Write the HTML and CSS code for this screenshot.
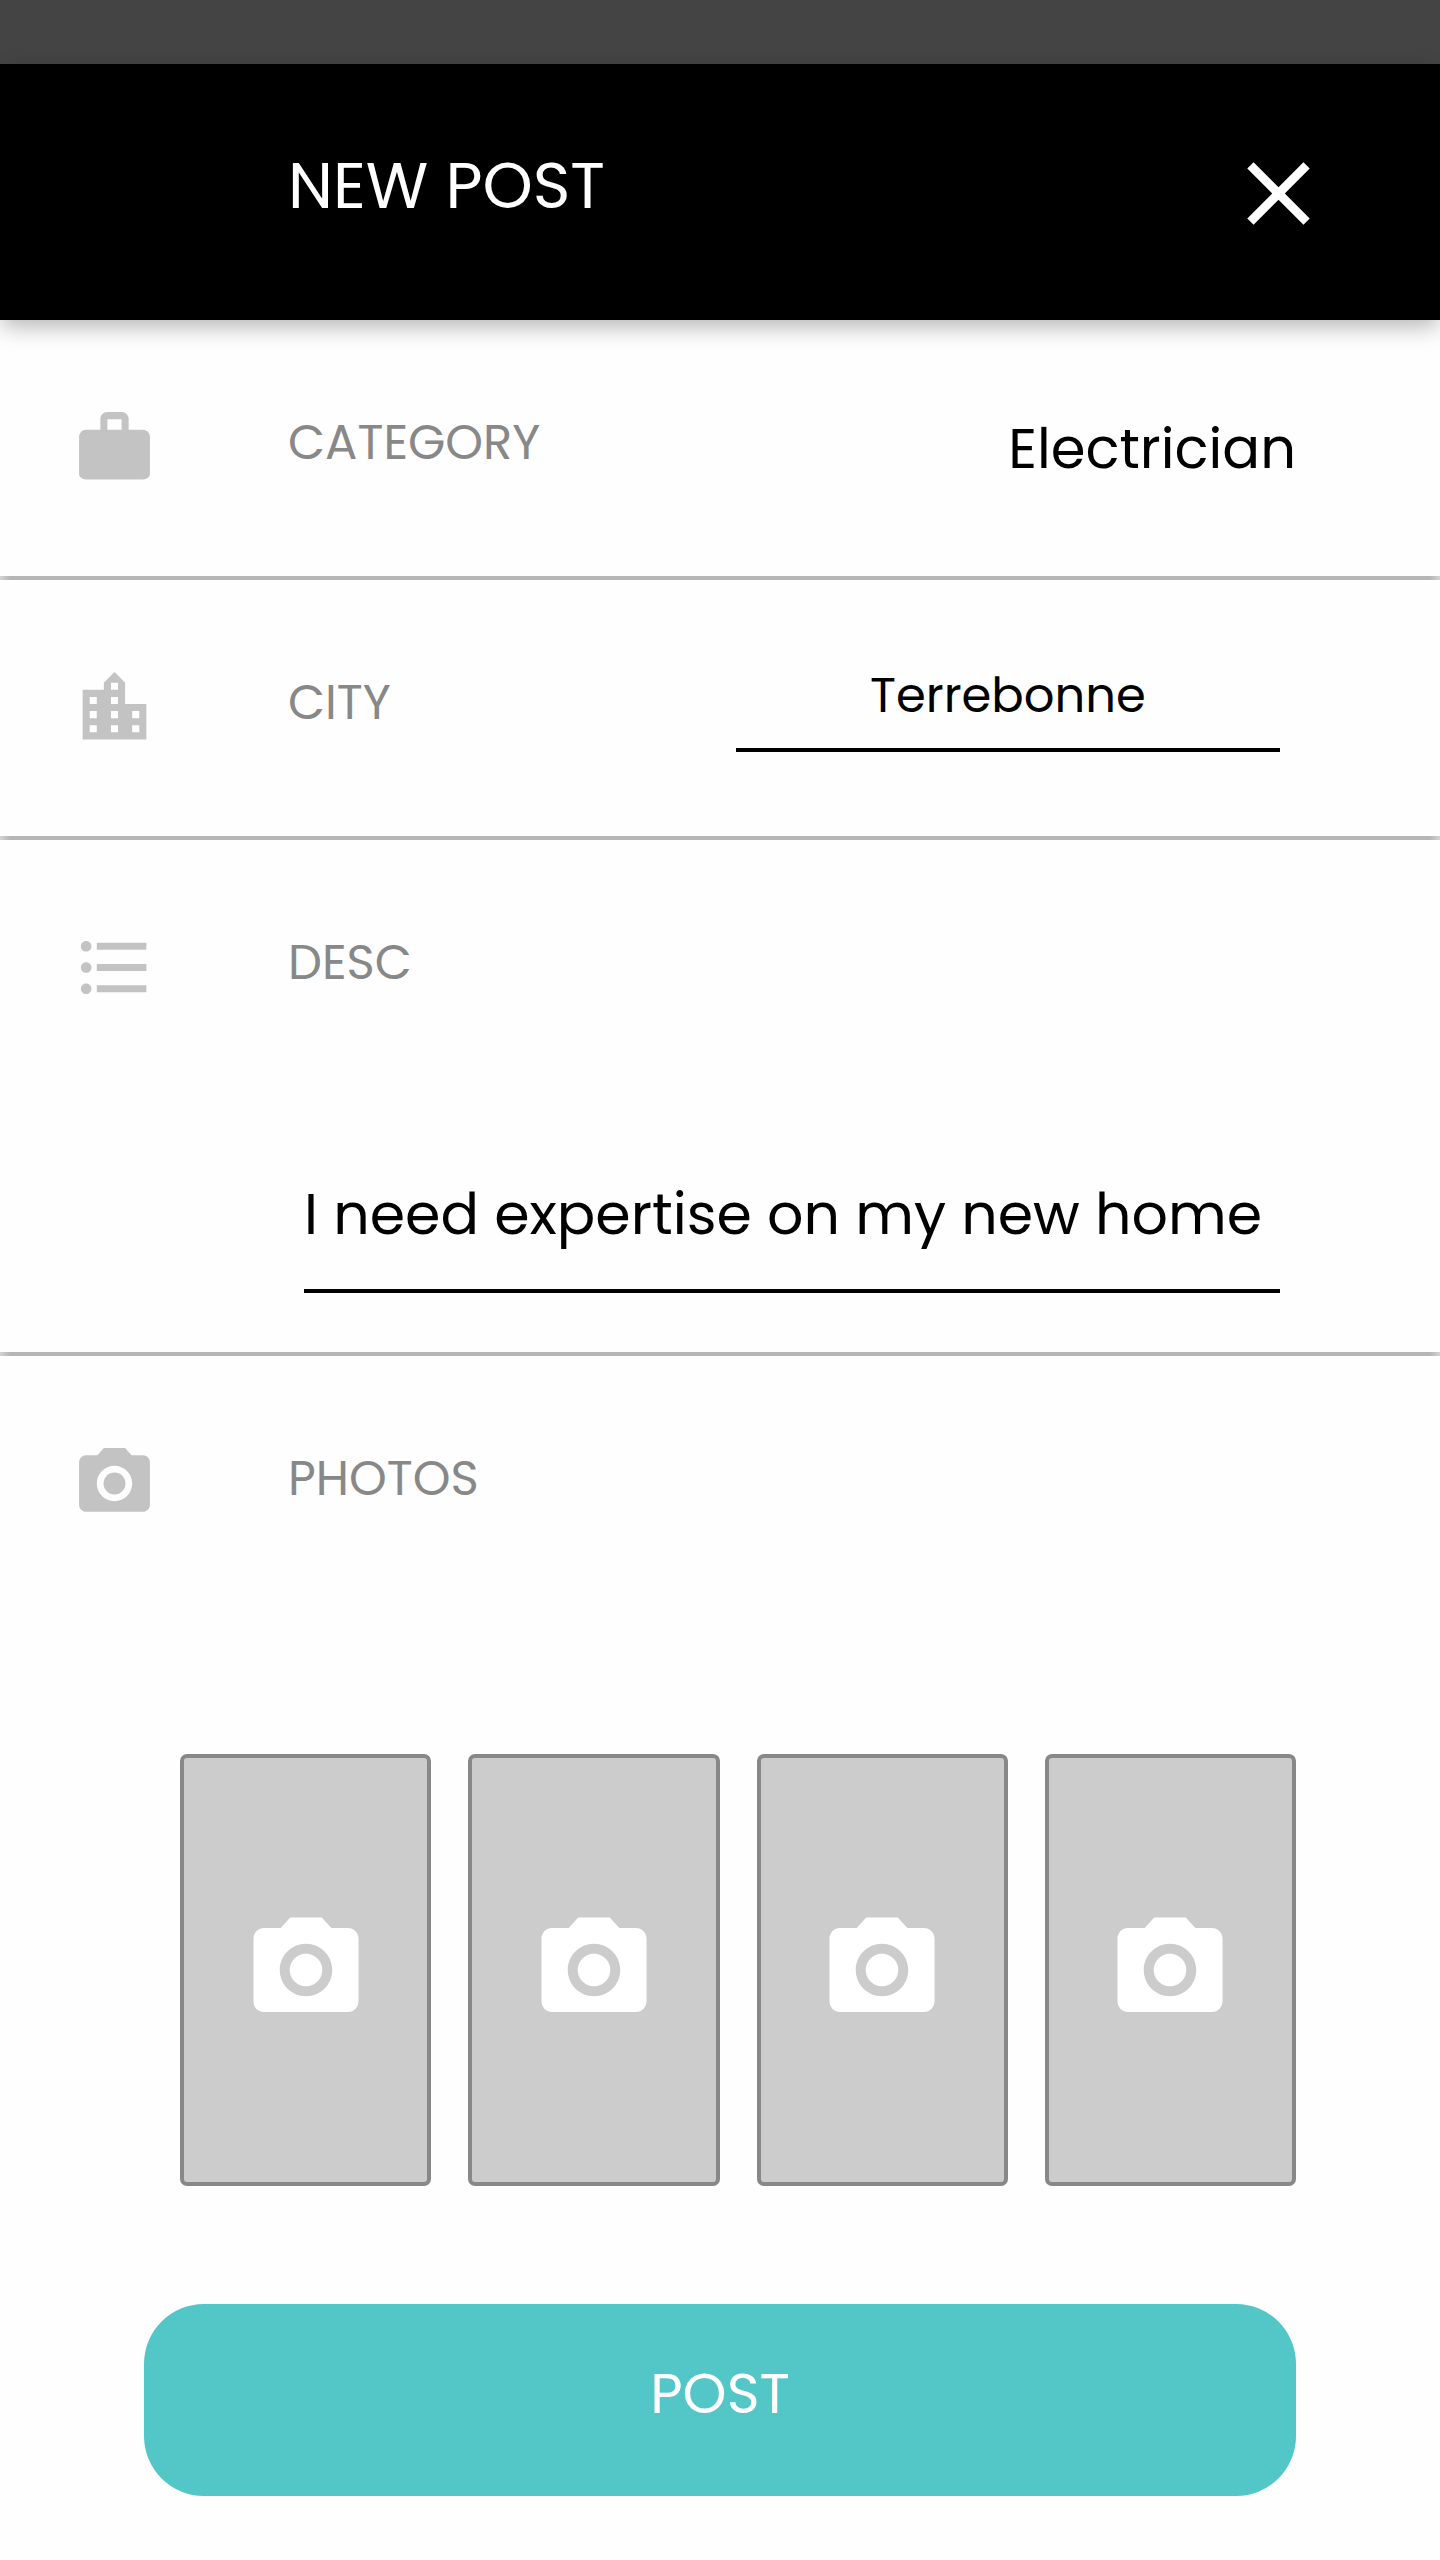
FILE: index.html
```html
<!DOCTYPE html>
<html lang="en">
<head>
  <meta charset="utf-8">
  <meta name="viewport" content="width=device-width, initial-scale=1">
  <title>New post</title>
  <link rel="stylesheet" href="styles.css">
</head>
<body>
  <svg class="sprite" aria-hidden="true">
    <symbol id="camera" viewBox="0 0 24 24">
      <circle cx="12" cy="12" r="3.1"/>
      <path d="M9 2 7.17 4H4c-1.1 0-2 .9-2 2v12c0 1.1.9 2 2 2h16c1.1 0 2-.9 2-2V6c0-1.1-.9-2-2-2h-3.17L15 2H9zm3 15c-2.76 0-5-2.24-5-5s2.24-5 5-5 5 2.24 5 5-2.24 5-5 5z"/>
    </symbol>
  </svg>
  <div class="status-bar"></div>
  <header class="header">
    <h1 class="header-title">NEW POST</h1>
    <button class="close" type="button" aria-label="Close">
      <svg class="close-icon" viewBox="0 0 24 24" aria-hidden="true"><path d="M19 6.41 17.59 5 12 10.59 6.41 5 5 6.41 10.59 12 5 17.59 6.41 19 12 13.41 17.59 19 19 17.59 13.41 12z"/></svg>
    </button>
  </header>
  <form class="form">
    <section class="row">
      <svg class="row-icon" viewBox="0 0 24 24" aria-hidden="true"><path d="M20 7h-4V4c0-1.1-.9-2-2-2h-4c-1.1 0-2 .9-2 2v3H4c-1.1 0-2 .9-2 2v10.500c0 .9.9 1.500 2 1.500h16c1.100 0 2-.6 2-1.500V9c0-1.100-.9-2-2-2zm-6 0h-4V4h4v3z"/></svg>
      <div class="row-body">
        <label class="label" for="category">CATEGORY</label>
        <select class="category" id="category"><option>Electrician</option></select>
      </div>
    </section>
    <section class="row">
      <svg class="row-icon" viewBox="0 0 24 24" aria-hidden="true"><path d="M15 11V5l-3-3-3 3v2H3v14h18V11h-6zm-8 8H5v-2h2v2zm0-4H5v-2h2v2zm0-4H5V9h2v2zm6 8h-2v-2h2v2zm0-4h-2v-2h2v2zm0-4h-2V9h2v2zm0-4h-2V5h2v2zm6 12h-2v-2h2v2zm0-4h-2v-2h2v2z"/></svg>
      <div class="row-body">
        <label class="label" for="city">CITY</label>
        <input class="field city" id="city" type="text" value="Terrebonne">
      </div>
    </section>
    <section class="row">
      <svg class="row-icon" viewBox="0 0 24 24" aria-hidden="true"><path d="M4 10.500c-.83 0-1.500.67-1.500 1.500s.67 1.500 1.500 1.500 1.500-.67 1.500-1.500-.67-1.500-1.500-1.500zm0-6c-.83 0-1.500.67-1.500 1.500S3.170 7.500 4 7.500 5.500 6.830 5.500 6 4.830 4.500 4 4.500zm0 12c-.83 0-1.500.68-1.500 1.500s.68 1.500 1.500 1.500 1.500-.68 1.500-1.500-.67-1.500-1.500-1.500zM7 19h14v-2H7v2zm0-6h14v-2H7v2zm0-8v2h14V5H7z"/></svg>
      <div class="row-body stacked">
        <label class="label" for="desc">DESC</label>
        <input class="field desc" id="desc" type="text" value="I need expertise on my new home">
      </div>
    </section>
    <section class="photos">
      <div class="row row-last">
        <svg class="row-icon" aria-hidden="true"><use href="#camera"/></svg>
        <div class="row-body"><h2 class="label">PHOTOS</h2></div>
      </div>
      <div class="tiles">
        <button class="tile" type="button" aria-label="Add photo 1"><svg class="tile-icon" aria-hidden="true"><use href="#camera"/></svg></button>
        <button class="tile" type="button" aria-label="Add photo 2"><svg class="tile-icon" aria-hidden="true"><use href="#camera"/></svg></button>
        <button class="tile" type="button" aria-label="Add photo 3"><svg class="tile-icon" aria-hidden="true"><use href="#camera"/></svg></button>
        <button class="tile" type="button" aria-label="Add photo 4"><svg class="tile-icon" aria-hidden="true"><use href="#camera"/></svg></button>
      </div>
    </section>
    <button class="submit" type="submit">POST</button>
  </form>
</body>
</html>
```

FILE: styles.css
```css
* {
  box-sizing: border-box;
}

body {
  margin: 0;
  background: #fefefe;
  color: #000;
  font-family: Poppins, Inter, "Liberation Sans", sans-serif;
}

button,
input,
select {
  margin: 0;
  padding: 0;
  border: 0;
  border-radius: 0;
  background: none;
  color: inherit;
  font-family: inherit;
  appearance: none;
}

.sprite {
  display: none;
}

.status-bar {
  height: 64px;
  background: #444;
}

.header {
  display: flex;
  justify-content: space-between;
  align-items: flex-start;
  min-height: 256px;
  padding: 76px 7.5% 0 20%;
  background: #000;
  color: #fff;
  box-shadow: 0 8px 22px -2px rgba(0, 0, 0, 0.3);
}

.header-title {
  margin: 6px 0 0;
  font-size: 64px;
  font-weight: 400;
  line-height: 80px;
}

.close,
.close-icon {
  display: block;
  width: 107px;
  height: 107px;
  fill: #fff;
}

.row {
  display: grid;
  grid-template-columns: 20% 70% 10%;
  align-items: start;
  min-height: 260px;
  background: linear-gradient(90deg, #d4d4d4, #b6b6b6 10px, #b6b6b6 calc(100% - 10px), #d4d4d4) bottom / 100% 4px no-repeat;
}

.row-last {
  min-height: 0;
  background: none;
}

.row-icon {
  width: 85px;
  height: 85px;
  margin: 85px 0 0 25%;
  fill: #c3c3c3;
}

.row-body {
  display: flex;
  justify-content: space-between;
  align-items: flex-start;
}

.stacked {
  flex-direction: column;
  align-items: stretch;
}

.label {
  margin: 93px 0 0;
  color: #888;
  font-size: 48px;
  font-weight: 400;
  line-height: 60px;
}

.category {
  height: 72px;
  margin-top: 93px;
  font-size: 56px;
  line-height: 72px;
  text-align: right;
  text-align-last: right;
}

.field {
  margin: 0 16px;
  border-bottom: 4px solid #000;
}

.city {
  width: 54%;
  height: 86px;
  margin-top: 86px;
  padding-bottom: 22px;
  font-size: 48px;
  line-height: 60px;
  text-align: center;
}

.desc {
  height: 115px;
  margin-top: 185px;
  margin-bottom: 63px;
  padding-bottom: 39px;
  font-size: 57px;
  line-height: 72px;
}

.tiles {
  display: grid;
  grid-template-columns: repeat(4, 1fr);
  gap: 37px;
  margin-top: 228px;
  padding: 0 10% 0 12.5%;
}

.tile {
  display: flex;
  justify-content: center;
  align-items: center;
  height: 432px;
  border: 4px solid #888;
  border-radius: 7px;
  background: #ccc;
}

.tile-icon {
  width: 126px;
  height: 126px;
  fill: #fff;
}

.submit {
  display: block;
  width: 80%;
  height: 192px;
  margin: 118px auto 64px;
  padding-bottom: 12px;
  border-radius: 60px;
  background: #53c6c7;
  color: #fff;
  font-size: 56px;
  line-height: 72px;
}
```
